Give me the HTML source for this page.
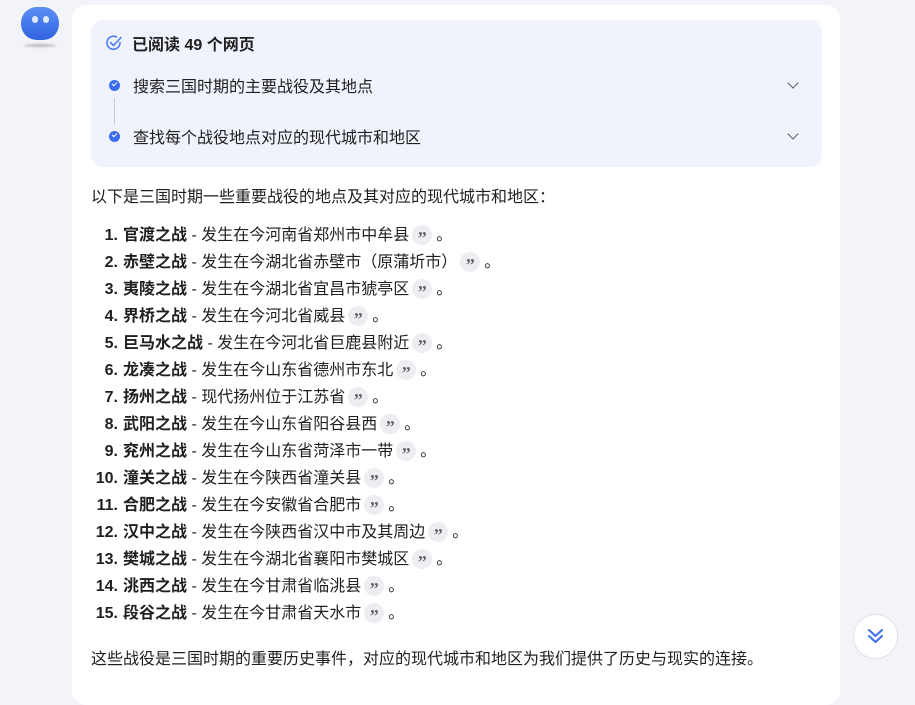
<!DOCTYPE html>
<html><head><meta charset="utf-8"><style>
body{margin:0;width:915px;height:686px;background:#f3f4f9;font-family:"Liberation Sans","Noto Sans CJK SC",sans-serif;color:#1f1f1f;overflow:hidden;position:relative}
.avatar{position:absolute;left:21px;top:7px;width:38px;height:33px;border-radius:16px;background:linear-gradient(#5b8ff5,#2f62e0)}
.avatar i{position:absolute;top:9px;width:6px;height:7px;border-radius:3px;background:#dfe8ff}
.shadow{position:absolute;left:24px;top:44px;width:32px;height:3px;border-radius:50%;background:#bbb;filter:blur(1px)}
.card{position:absolute;left:72px;top:5px;width:768px;height:700px;background:#fff;border-radius:14px}
.box{position:absolute;left:91px;top:20px;width:731px;height:147px;background:#f1f3fc;border-radius:12px}
.t{position:absolute;font-size:16px;white-space:nowrap}
.dot{position:absolute;left:109px;width:11px;height:11px;border-radius:50%;background:#3a6df0}
.dot:after{content:"";position:absolute;left:3px;top:2px;width:4px;height:2px;border-left:1.3px solid #fff;border-bottom:1.3px solid #fff;transform:rotate(-45deg)}
.chev{position:absolute;left:789px;width:7px;height:7px;border-right:1.5px solid #555;border-bottom:1.5px solid #555;transform:rotate(45deg)}
ol{position:absolute;left:90px;top:225px;margin:0;padding:0;list-style:none;font-size:16px}
li{height:27px;line-height:20px;white-space:nowrap}
li .n{display:inline-block;width:28px;text-align:right;font-weight:bold;margin-right:5px}
b{font-weight:bold}
.c{display:inline-block;width:20px;height:20px;border-radius:50%;background:#eceef2;color:#666;font-family:"Liberation Serif",serif;font-size:18px;line-height:26px;text-align:center;vertical-align:-4px;margin:0 4px 0 3px;font-weight:bold}
.btn{position:absolute;left:853px;top:614px;width:43px;height:43px;border-radius:50%;background:#fff;border:1px solid #e3e3e6}
</style></head><body>
<div class="avatar"><i style="left:11px"></i><i style="left:22px"></i></div>
<div class="shadow"></div>
<div class="card"></div>
<div class="box"></div>
<svg style="position:absolute;left:105px;top:34px" width="18" height="18" viewBox="0 0 18 18"><path d="M15 8.5A6.5 6.5 0 1 1 11.5 3" fill="none" stroke="#4d7ef2" stroke-width="1.6" stroke-linecap="round"/><path d="M5.5 8.5l3 3L16 3.5" fill="none" stroke="#4d7ef2" stroke-width="1.6" stroke-linecap="round" stroke-linejoin="round"/></svg>
<div class="t" style="left:132px;top:31px;font-weight:bold">已阅读 49 个网页</div>
<div class="dot" style="top:80px"></div>
<div style="position:absolute;left:114px;top:98px;width:1px;height:27px;background:#ccc"></div>
<div class="dot" style="top:131px"></div>
<div class="t" style="left:133px;top:73px">搜索三国时期的主要战役及其地点</div>
<div class="t" style="left:133px;top:124px">查找每个战役地点对应的现代城市和地区</div>
<div class="chev" style="top:79px"></div>
<div class="chev" style="top:130px"></div>
<div class="t" style="left:91px;top:183px">以下是三国时期一些重要战役的地点及其对应的现代城市和地区：</div>
<ol>
<li><span class="n">1.</span><b>官渡之战</b> - 发生在今河南省郑州市中牟县<span class="c">”</span>。</li>
<li><span class="n">2.</span><b>赤壁之战</b> - 发生在今湖北省赤壁市（原蒲圻市）<span class="c">”</span>。</li>
<li><span class="n">3.</span><b>夷陵之战</b> - 发生在今湖北省宜昌市猇亭区<span class="c">”</span>。</li>
<li><span class="n">4.</span><b>界桥之战</b> - 发生在今河北省威县<span class="c">”</span>。</li>
<li><span class="n">5.</span><b>巨马水之战</b> - 发生在今河北省巨鹿县附近<span class="c">”</span>。</li>
<li><span class="n">6.</span><b>龙凑之战</b> - 发生在今山东省德州市东北<span class="c">”</span>。</li>
<li><span class="n">7.</span><b>扬州之战</b> - 现代扬州位于江苏省<span class="c">”</span>。</li>
<li><span class="n">8.</span><b>武阳之战</b> - 发生在今山东省阳谷县西<span class="c">”</span>。</li>
<li><span class="n">9.</span><b>兖州之战</b> - 发生在今山东省菏泽市一带<span class="c">”</span>。</li>
<li><span class="n">10.</span><b>潼关之战</b> - 发生在今陕西省潼关县<span class="c">”</span>。</li>
<li><span class="n">11.</span><b>合肥之战</b> - 发生在今安徽省合肥市<span class="c">”</span>。</li>
<li><span class="n">12.</span><b>汉中之战</b> - 发生在今陕西省汉中市及其周边<span class="c">”</span>。</li>
<li><span class="n">13.</span><b>樊城之战</b> - 发生在今湖北省襄阳市樊城区<span class="c">”</span>。</li>
<li><span class="n">14.</span><b>洮西之战</b> - 发生在今甘肃省临洮县<span class="c">”</span>。</li>
<li><span class="n">15.</span><b>段谷之战</b> - 发生在今甘肃省天水市<span class="c">”</span>。</li>
</ol>
<div class="t" style="left:91px;top:645px">这些战役是三国时期的重要历史事件，对应的现代城市和地区为我们提供了历史与现实的连接。</div>
<div class="btn"><svg style="position:absolute;left:12px;top:12px" width="19" height="19" viewBox="0 0 19 19"><path d="M3 3l6.5 6 6.5-6M3 9l6.5 6 6.5-6" fill="none" stroke="#3a6df0" stroke-width="2" stroke-linecap="round" stroke-linejoin="round"/></svg></div>
</body></html>
